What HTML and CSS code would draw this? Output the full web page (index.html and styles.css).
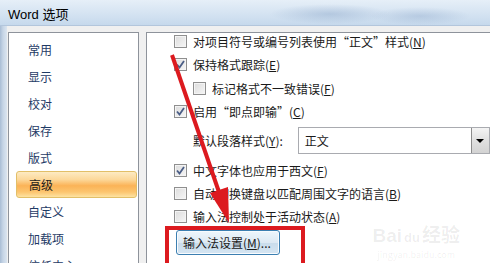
FILE: index.html
```html
<!DOCTYPE html>
<html lang="zh-CN">
<head>
    <meta charset="UTF-8">
    <title>Word 选项</title>
    <link rel="stylesheet" href="styles.css">
</head>
<body>
    <div class="window">
        <div class="title-bar">Word 选项</div>
        <div class="client">
            <ul class="nav">
                <li>常用</li>
                <li>显示</li>
                <li>校对</li>
                <li>保存</li>
                <li>版式</li>
                <li class="active">高级</li>
                <li>自定义</li>
                <li>加载项</li>
                <li>信任中心</li>
            </ul>
            <div class="panel">
                <div class="options">
                    <div class="row">
                        <span class="box"></span>
                        <span>对项目符号或编号列表使用“正文”样式(<u>N</u>)</span>
                    </div>
                    <div class="row">
                        <span class="box checked"></span>
                        <span>保持格式跟踪(<u>E</u>)</span>
                    </div>
                    <div class="row indent">
                        <span class="box"></span>
                        <span>标记格式不一致错误(<u>F</u>)</span>
                    </div>
                    <div class="row">
                        <span class="box checked"></span>
                        <span>启用“即点即输”(<u>C</u>)</span>
                    </div>
                    <div class="row select-row">
                        <span class="select-label">默认段落样式(<u>Y</u>):</span>
                        <div class="select">
                            <span class="select-value">正文</span>
                            <span class="select-btn"></span>
                        </div>
                    </div>
                    <div class="row after-select">
                        <span class="box checked"></span>
                        <span>中文字体也应用于西文(<u>F</u>)</span>
                    </div>
                    <div class="row">
                        <span class="box"></span>
                        <span>自动切换键盘以匹配周围文字的语言(<u>B</u>)</span>
                    </div>
                    <div class="row">
                        <span class="box"></span>
                        <span>输入法控制处于活动状态(<u>A</u>)</span>
                    </div>
                    <button class="ime-btn">输入法设置(<u>M</u>)...</button>
                </div>
                <div class="watermark">
                    <div class="wm-logo">Bai<span class="paw">du</span>经验</div>
                    <div class="wm-url">jingyan.baidu.com</div>
                </div>
            </div>
        </div>

        <!-- red annotation drawn over the screenshot -->
        <div class="mark-box"></div>
        <svg class="mark-arrow" width="490" height="263" viewBox="0 0 490 263">
            <line x1="172" y1="55" x2="221" y2="198" stroke="#dc1a1f" stroke-width="4"/>
            <polygon points="229,223 210,193 228,187" fill="#dc1a1f"/>
        </svg>
    </div>
</body>
</html>
```

FILE: styles.css
```css
* {
    box-sizing: border-box;
}

body {
    margin: 0;
    width: 490px;
    height: 263px;
    overflow: hidden;
    font-family: "Noto Sans CJK SC", "Liberation Sans", sans-serif;
    font-size: 12px;
    color: #1a1a1a;
}

u {
    text-decoration: underline;
    text-underline-offset: 1px;
}

.window {
    position: relative;
    width: 490px;
    height: 263px;
    background: linear-gradient(to right, #a9bdd5 0, #c6d5e6 3px, #dbe5f0 7px, #f0f0f0 7px);
}

.title-bar {
    height: 26px;
    padding: 4px 0 0 8px;
    font-family: "Liberation Sans", "Noto Sans CJK SC", sans-serif;
    font-size: 13px;
    color: #000;
    background:
        radial-gradient(ellipse 60px 10px at 330px 14px, rgba(120, 150, 190, 0.35), transparent),
        radial-gradient(ellipse 50px 9px at 420px 16px, rgba(120, 150, 190, 0.3), transparent),
        linear-gradient(#e6eff8, #d3e2f1 60%, #c6d9ec);
    border-bottom: 1px solid #b3c6dc;
}

.client {
    display: flex;
    gap: 7px;
    padding: 6px 0 0 8px;
    height: 237px;
}

.nav {
    list-style: none;
    margin: 0;
    padding: 3px 1px 0 7px;
    width: 131px;
    flex: none;
    background: #fff;
    border: 1px solid #8e939b;
    border-bottom: none;
    color: #1f3b66;
}

.nav li {
    height: 27px;
    line-height: 27px;
    padding-left: 12px;
}

.nav li.active {
    color: #1a1a1a;
    border: 1px solid #e2bf68;
    border-radius: 3px;
    line-height: 25px;
    background: linear-gradient(#fdebc3 0, #fcd89a 30%, #fbb357 55%, #fcc56f 80%, #fde3a2 100%);
}

.panel {
    position: relative;
    flex: 1;
    background: #fff;
    border: 1px solid #8e939b;
    border-right: none;
    border-bottom: none;
    overflow: hidden;
}

.options {
    margin-top: -3px;
    padding-left: 27px;
}

.row {
    display: flex;
    align-items: center;
    gap: 6px;
    height: 23px;
    white-space: nowrap;
}

.row.indent {
    margin-top: 1px;
    padding-left: 19px;
}

.box {
    width: 13px;
    height: 13px;
    flex: none;
    border: 1px solid #8f8f8f;
    background: linear-gradient(135deg, #dcdcdc, #f6f6f6);
    box-shadow: inset 0 0 0 1px #f4f4f4;
}

.box.checked {
    background:
        url("data:image/svg+xml,%3Csvg xmlns='http://www.w3.org/2000/svg' width='11' height='11'%3E%3Cpath d='M2 5.5 L4.5 8.5 L9 2' fill='none' stroke='%234a5d86' stroke-width='1.8'/%3E%3C/svg%3E") center / 11px 11px no-repeat,
        linear-gradient(135deg, #dcdcdc, #f6f6f6);
}

.select-row {
    margin-top: 4px;
    height: 27px;
    padding-left: 19px;
    gap: 15px;
}

.select {
    display: flex;
    width: 195px;
    height: 27px;
    border: 1px solid #a9abb0;
}

.select-value {
    flex: 1;
    padding: 4px 0 0 6px;
}

.select-btn {
    position: relative;
    width: 18px;
    border-left: 1px solid #8c8c8c;
    background: linear-gradient(#f4f4f4, #e0e0e0 50%, #d3d3d3);
}

.select-btn::after {
    content: "";
    position: absolute;
    left: 4px;
    top: 11px;
    border-left: 4px solid transparent;
    border-right: 4px solid transparent;
    border-top: 4px solid #000;
}

.after-select {
    margin-top: 5px;
}

.ime-btn {
    display: block;
    margin-top: 2px;
    margin-left: 2px;
    width: 104px;
    height: 25px;
    padding: 0 0 0 6px;
    text-align: left;
    font-family: inherit;
    font-size: 12px;
    color: #1a1a1a;
    border: 1px solid #3c7fb1;
    border-radius: 3px;
    background: linear-gradient(#eef6fc, #dde9f3 50%, #c9dceb 51%, #d5e5f2);
    box-shadow: inset 0 0 0 1px #f8fbfe;
}

.watermark {
    position: absolute;
    right: 30px;
    top: 192px;
    color: rgba(0, 0, 0, 0.07);
    text-align: center;
}

.wm-logo {
    font-family: "Liberation Sans", "Noto Sans CJK SC", sans-serif;
    font-size: 19px;
    font-weight: bold;
    line-height: 22px;
}

.paw {
    font-size: 13px;
    margin: 0 2px;
}

.wm-url {
    font-size: 9px;
    line-height: 11px;
}

.mark-box {
    position: absolute;
    left: 165px;
    top: 226px;
    width: 140px;
    height: 60px;
    border: 4px solid #dc1a1f;
}

.mark-arrow {
    position: absolute;
    left: 0;
    top: 0;
    pointer-events: none;
}
```
